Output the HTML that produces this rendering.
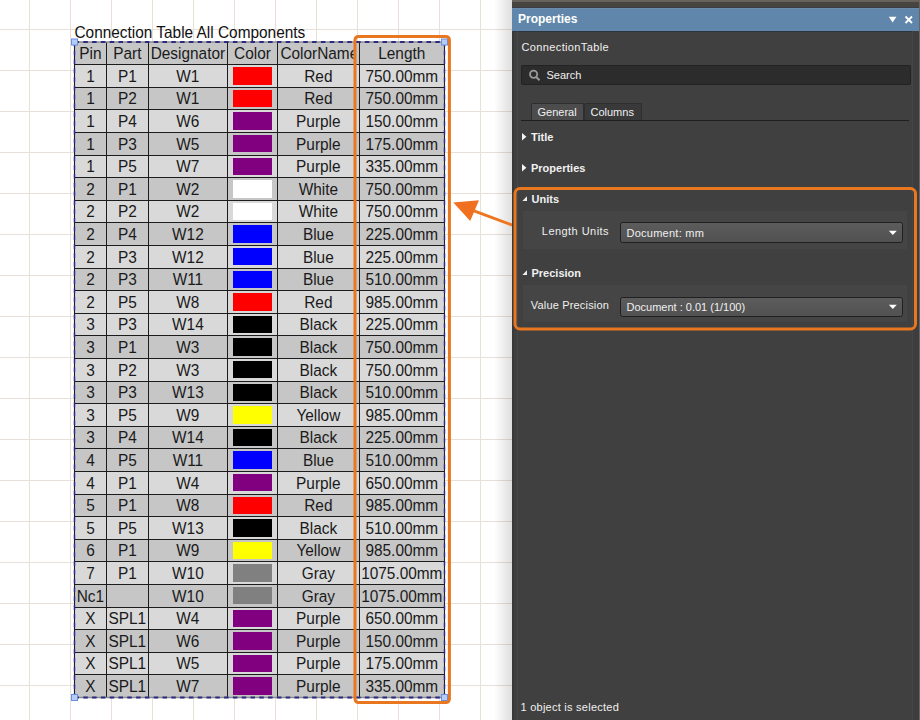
<!DOCTYPE html>
<html><head><meta charset="utf-8">
<style>
*{margin:0;padding:0;box-sizing:border-box}
html,body{width:920px;height:720px;overflow:hidden;background:#ffffff;font-family:"Liberation Sans",sans-serif}
.gv{position:absolute;top:0;width:1px;height:720px;background:#e8e0d8}
.gh{position:absolute;left:0;width:512px;height:1px;background:#e8e0d8}
#tbl{position:absolute;left:0;top:0;width:512px;height:720px;overflow:hidden}
.rb{position:absolute;left:74.5px;width:370px}
.sw{position:absolute;left:233px;width:39px}
.hl{position:absolute;left:74.5px;width:370px;height:1.2px;background:#1c1c1c}
.vl{position:absolute;top:42px;width:1.2px;height:655.4px;background:#1c1c1c}
.t{position:absolute;height:22.6px;line-height:22.6px;font-size:15.4px;color:#1a1a1a;text-align:center;white-space:nowrap;margin-top:1.2px;transform:scaleY(1.06)}
.title{position:absolute;left:74.5px;top:22.5px;font-size:15.4px;line-height:20px;color:#111;white-space:nowrap;transform:scaleY(1.07);transform-origin:0 15px}
.dash{position:absolute}
.hd{position:absolute;width:6px;height:6px;background:#b4ccf6;border:1px solid #6a8ee0}
#panel{position:absolute;left:512px;top:0;width:408px;height:720px;background:#404040;overflow:hidden;color:#f0f0f0;font-size:11px}
.p{position:absolute;white-space:nowrap;line-height:13px}
.b{font-weight:bold}
.dd{position:absolute;left:108px;width:282.5px;height:20.6px;border:1px solid #202020;border-radius:2.5px;background:linear-gradient(#5c5c5c,#515151)}
</style></head><body>
<div class="gv" style="left:29px"></div>
<div class="gv" style="left:70px"></div>
<div class="gv" style="left:111px"></div>
<div class="gv" style="left:152px"></div>
<div class="gv" style="left:193px"></div>
<div class="gv" style="left:234px"></div>
<div class="gv" style="left:275px"></div>
<div class="gv" style="left:316px"></div>
<div class="gv" style="left:357px"></div>
<div class="gv" style="left:398px"></div>
<div class="gv" style="left:439px"></div>
<div class="gv" style="left:480px"></div>
<div class="gh" style="top:29px"></div>
<div class="gh" style="top:70px"></div>
<div class="gh" style="top:111px"></div>
<div class="gh" style="top:152px"></div>
<div class="gh" style="top:193px"></div>
<div class="gh" style="top:234px"></div>
<div class="gh" style="top:275px"></div>
<div class="gh" style="top:316px"></div>
<div class="gh" style="top:357px"></div>
<div class="gh" style="top:398px"></div>
<div class="gh" style="top:439px"></div>
<div class="gh" style="top:480px"></div>
<div class="gh" style="top:521px"></div>
<div class="gh" style="top:562px"></div>
<div class="gh" style="top:603px"></div>
<div class="gh" style="top:644px"></div>
<div class="gh" style="top:685px"></div>
<div style="position:absolute;left:494px;top:0;width:18px;height:720px;background:linear-gradient(to right,rgba(0,0,0,0),rgba(0,0,0,0.13))"></div>
<div class="title">Connection Table All Components</div>
<div id="tbl">
<div class="rb" style="top:42.00px;height:22.60px;background:#c6c6c6"></div>
<div class="rb" style="top:64.60px;height:22.60px;background:#d9d9d9"></div>
<div class="rb" style="top:87.20px;height:22.60px;background:#c6c6c6"></div>
<div class="rb" style="top:109.80px;height:22.60px;background:#d9d9d9"></div>
<div class="rb" style="top:132.40px;height:22.60px;background:#c6c6c6"></div>
<div class="rb" style="top:155.00px;height:22.60px;background:#d9d9d9"></div>
<div class="rb" style="top:177.60px;height:22.60px;background:#c6c6c6"></div>
<div class="rb" style="top:200.20px;height:22.60px;background:#d9d9d9"></div>
<div class="rb" style="top:222.80px;height:22.60px;background:#c6c6c6"></div>
<div class="rb" style="top:245.40px;height:22.60px;background:#d9d9d9"></div>
<div class="rb" style="top:268.00px;height:22.60px;background:#c6c6c6"></div>
<div class="rb" style="top:290.60px;height:22.60px;background:#d9d9d9"></div>
<div class="rb" style="top:313.20px;height:22.60px;background:#d9d9d9"></div>
<div class="rb" style="top:335.80px;height:22.60px;background:#c6c6c6"></div>
<div class="rb" style="top:358.40px;height:22.60px;background:#d9d9d9"></div>
<div class="rb" style="top:381.00px;height:22.60px;background:#c6c6c6"></div>
<div class="rb" style="top:403.60px;height:22.60px;background:#d9d9d9"></div>
<div class="rb" style="top:426.20px;height:22.60px;background:#c6c6c6"></div>
<div class="rb" style="top:448.80px;height:22.60px;background:#c6c6c6"></div>
<div class="rb" style="top:471.40px;height:22.60px;background:#d9d9d9"></div>
<div class="rb" style="top:494.00px;height:22.60px;background:#c6c6c6"></div>
<div class="rb" style="top:516.60px;height:22.60px;background:#d9d9d9"></div>
<div class="rb" style="top:539.20px;height:22.60px;background:#c6c6c6"></div>
<div class="rb" style="top:561.80px;height:22.60px;background:#d9d9d9"></div>
<div class="rb" style="top:584.40px;height:22.60px;background:#c6c6c6"></div>
<div class="rb" style="top:607.00px;height:22.60px;background:#d9d9d9"></div>
<div class="rb" style="top:629.60px;height:22.60px;background:#c6c6c6"></div>
<div class="rb" style="top:652.20px;height:22.60px;background:#d9d9d9"></div>
<div class="rb" style="top:674.80px;height:22.60px;background:#c6c6c6"></div>
<div class="sw" style="top:67.20px;height:17.40px;background:#ff0000"></div>
<div class="sw" style="top:89.80px;height:17.40px;background:#ff0000"></div>
<div class="sw" style="top:112.40px;height:17.40px;background:#800080"></div>
<div class="sw" style="top:135.00px;height:17.40px;background:#800080"></div>
<div class="sw" style="top:157.60px;height:17.40px;background:#800080"></div>
<div class="sw" style="top:180.20px;height:17.40px;background:#ffffff"></div>
<div class="sw" style="top:202.80px;height:17.40px;background:#ffffff"></div>
<div class="sw" style="top:225.40px;height:17.40px;background:#0000ff"></div>
<div class="sw" style="top:248.00px;height:17.40px;background:#0000ff"></div>
<div class="sw" style="top:270.60px;height:17.40px;background:#0000ff"></div>
<div class="sw" style="top:293.20px;height:17.40px;background:#ff0000"></div>
<div class="sw" style="top:315.80px;height:17.40px;background:#000000"></div>
<div class="sw" style="top:338.40px;height:17.40px;background:#000000"></div>
<div class="sw" style="top:361.00px;height:17.40px;background:#000000"></div>
<div class="sw" style="top:383.60px;height:17.40px;background:#000000"></div>
<div class="sw" style="top:406.20px;height:17.40px;background:#ffff00"></div>
<div class="sw" style="top:428.80px;height:17.40px;background:#000000"></div>
<div class="sw" style="top:451.40px;height:17.40px;background:#0000ff"></div>
<div class="sw" style="top:474.00px;height:17.40px;background:#800080"></div>
<div class="sw" style="top:496.60px;height:17.40px;background:#ff0000"></div>
<div class="sw" style="top:519.20px;height:17.40px;background:#000000"></div>
<div class="sw" style="top:541.80px;height:17.40px;background:#ffff00"></div>
<div class="sw" style="top:564.40px;height:17.40px;background:#808080"></div>
<div class="sw" style="top:587.00px;height:17.40px;background:#808080"></div>
<div class="sw" style="top:609.60px;height:17.40px;background:#800080"></div>
<div class="sw" style="top:632.20px;height:17.40px;background:#800080"></div>
<div class="sw" style="top:654.80px;height:17.40px;background:#800080"></div>
<div class="sw" style="top:677.40px;height:17.40px;background:#800080"></div>
<div class="hl" style="top:64.10px"></div>
<div class="hl" style="top:86.70px"></div>
<div class="hl" style="top:109.30px"></div>
<div class="hl" style="top:131.90px"></div>
<div class="hl" style="top:154.50px"></div>
<div class="hl" style="top:177.10px"></div>
<div class="hl" style="top:199.70px"></div>
<div class="hl" style="top:222.30px"></div>
<div class="hl" style="top:244.90px"></div>
<div class="hl" style="top:267.50px"></div>
<div class="hl" style="top:290.10px"></div>
<div class="hl" style="top:312.70px"></div>
<div class="hl" style="top:335.30px"></div>
<div class="hl" style="top:357.90px"></div>
<div class="hl" style="top:380.50px"></div>
<div class="hl" style="top:403.10px"></div>
<div class="hl" style="top:425.70px"></div>
<div class="hl" style="top:448.30px"></div>
<div class="hl" style="top:470.90px"></div>
<div class="hl" style="top:493.50px"></div>
<div class="hl" style="top:516.10px"></div>
<div class="hl" style="top:538.70px"></div>
<div class="hl" style="top:561.30px"></div>
<div class="hl" style="top:583.90px"></div>
<div class="hl" style="top:606.50px"></div>
<div class="hl" style="top:629.10px"></div>
<div class="hl" style="top:651.70px"></div>
<div class="hl" style="top:674.30px"></div>
<div class="vl" style="left:105.90px"></div>
<div class="vl" style="left:147.80px"></div>
<div class="vl" style="left:227.00px"></div>
<div class="vl" style="left:277.00px"></div>
<div class="vl" style="left:358.70px"></div>
<div class="t" style="left:74.50px;top:42.00px;width:31.90px">Pin</div>
<div class="t" style="left:106.40px;top:42.00px;width:41.90px">Part</div>
<div class="t" style="left:148.30px;top:42.00px;width:79.20px">Designator</div>
<div class="t" style="left:227.50px;top:42.00px;width:50.00px">Color</div>
<div style="position:absolute;left:277.5px;top:42px;width:78.5px;height:22.6px;overflow:hidden"><div class="t" style="left:1px;top:0;width:81.7px">ColorName</div></div>
<div class="t" style="left:359.20px;top:42.00px;width:85.20px">Length</div>
<div class="t" style="left:74.50px;top:64.60px;width:31.90px">1</div>
<div class="t" style="left:106.40px;top:64.60px;width:41.90px">P1</div>
<div class="t" style="left:148.30px;top:64.60px;width:79.20px">W1</div>
<div class="t" style="left:277.50px;top:64.60px;width:81.70px">Red</div>
<div class="t" style="left:359.20px;top:64.60px;width:85.20px">750.00mm</div>
<div class="t" style="left:74.50px;top:87.20px;width:31.90px">1</div>
<div class="t" style="left:106.40px;top:87.20px;width:41.90px">P2</div>
<div class="t" style="left:148.30px;top:87.20px;width:79.20px">W1</div>
<div class="t" style="left:277.50px;top:87.20px;width:81.70px">Red</div>
<div class="t" style="left:359.20px;top:87.20px;width:85.20px">750.00mm</div>
<div class="t" style="left:74.50px;top:109.80px;width:31.90px">1</div>
<div class="t" style="left:106.40px;top:109.80px;width:41.90px">P4</div>
<div class="t" style="left:148.30px;top:109.80px;width:79.20px">W6</div>
<div class="t" style="left:277.50px;top:109.80px;width:81.70px">Purple</div>
<div class="t" style="left:359.20px;top:109.80px;width:85.20px">150.00mm</div>
<div class="t" style="left:74.50px;top:132.40px;width:31.90px">1</div>
<div class="t" style="left:106.40px;top:132.40px;width:41.90px">P3</div>
<div class="t" style="left:148.30px;top:132.40px;width:79.20px">W5</div>
<div class="t" style="left:277.50px;top:132.40px;width:81.70px">Purple</div>
<div class="t" style="left:359.20px;top:132.40px;width:85.20px">175.00mm</div>
<div class="t" style="left:74.50px;top:155.00px;width:31.90px">1</div>
<div class="t" style="left:106.40px;top:155.00px;width:41.90px">P5</div>
<div class="t" style="left:148.30px;top:155.00px;width:79.20px">W7</div>
<div class="t" style="left:277.50px;top:155.00px;width:81.70px">Purple</div>
<div class="t" style="left:359.20px;top:155.00px;width:85.20px">335.00mm</div>
<div class="t" style="left:74.50px;top:177.60px;width:31.90px">2</div>
<div class="t" style="left:106.40px;top:177.60px;width:41.90px">P1</div>
<div class="t" style="left:148.30px;top:177.60px;width:79.20px">W2</div>
<div class="t" style="left:277.50px;top:177.60px;width:81.70px">White</div>
<div class="t" style="left:359.20px;top:177.60px;width:85.20px">750.00mm</div>
<div class="t" style="left:74.50px;top:200.20px;width:31.90px">2</div>
<div class="t" style="left:106.40px;top:200.20px;width:41.90px">P2</div>
<div class="t" style="left:148.30px;top:200.20px;width:79.20px">W2</div>
<div class="t" style="left:277.50px;top:200.20px;width:81.70px">White</div>
<div class="t" style="left:359.20px;top:200.20px;width:85.20px">750.00mm</div>
<div class="t" style="left:74.50px;top:222.80px;width:31.90px">2</div>
<div class="t" style="left:106.40px;top:222.80px;width:41.90px">P4</div>
<div class="t" style="left:148.30px;top:222.80px;width:79.20px">W12</div>
<div class="t" style="left:277.50px;top:222.80px;width:81.70px">Blue</div>
<div class="t" style="left:359.20px;top:222.80px;width:85.20px">225.00mm</div>
<div class="t" style="left:74.50px;top:245.40px;width:31.90px">2</div>
<div class="t" style="left:106.40px;top:245.40px;width:41.90px">P3</div>
<div class="t" style="left:148.30px;top:245.40px;width:79.20px">W12</div>
<div class="t" style="left:277.50px;top:245.40px;width:81.70px">Blue</div>
<div class="t" style="left:359.20px;top:245.40px;width:85.20px">225.00mm</div>
<div class="t" style="left:74.50px;top:268.00px;width:31.90px">2</div>
<div class="t" style="left:106.40px;top:268.00px;width:41.90px">P3</div>
<div class="t" style="left:148.30px;top:268.00px;width:79.20px">W11</div>
<div class="t" style="left:277.50px;top:268.00px;width:81.70px">Blue</div>
<div class="t" style="left:359.20px;top:268.00px;width:85.20px">510.00mm</div>
<div class="t" style="left:74.50px;top:290.60px;width:31.90px">2</div>
<div class="t" style="left:106.40px;top:290.60px;width:41.90px">P5</div>
<div class="t" style="left:148.30px;top:290.60px;width:79.20px">W8</div>
<div class="t" style="left:277.50px;top:290.60px;width:81.70px">Red</div>
<div class="t" style="left:359.20px;top:290.60px;width:85.20px">985.00mm</div>
<div class="t" style="left:74.50px;top:313.20px;width:31.90px">3</div>
<div class="t" style="left:106.40px;top:313.20px;width:41.90px">P3</div>
<div class="t" style="left:148.30px;top:313.20px;width:79.20px">W14</div>
<div class="t" style="left:277.50px;top:313.20px;width:81.70px">Black</div>
<div class="t" style="left:359.20px;top:313.20px;width:85.20px">225.00mm</div>
<div class="t" style="left:74.50px;top:335.80px;width:31.90px">3</div>
<div class="t" style="left:106.40px;top:335.80px;width:41.90px">P1</div>
<div class="t" style="left:148.30px;top:335.80px;width:79.20px">W3</div>
<div class="t" style="left:277.50px;top:335.80px;width:81.70px">Black</div>
<div class="t" style="left:359.20px;top:335.80px;width:85.20px">750.00mm</div>
<div class="t" style="left:74.50px;top:358.40px;width:31.90px">3</div>
<div class="t" style="left:106.40px;top:358.40px;width:41.90px">P2</div>
<div class="t" style="left:148.30px;top:358.40px;width:79.20px">W3</div>
<div class="t" style="left:277.50px;top:358.40px;width:81.70px">Black</div>
<div class="t" style="left:359.20px;top:358.40px;width:85.20px">750.00mm</div>
<div class="t" style="left:74.50px;top:381.00px;width:31.90px">3</div>
<div class="t" style="left:106.40px;top:381.00px;width:41.90px">P3</div>
<div class="t" style="left:148.30px;top:381.00px;width:79.20px">W13</div>
<div class="t" style="left:277.50px;top:381.00px;width:81.70px">Black</div>
<div class="t" style="left:359.20px;top:381.00px;width:85.20px">510.00mm</div>
<div class="t" style="left:74.50px;top:403.60px;width:31.90px">3</div>
<div class="t" style="left:106.40px;top:403.60px;width:41.90px">P5</div>
<div class="t" style="left:148.30px;top:403.60px;width:79.20px">W9</div>
<div class="t" style="left:277.50px;top:403.60px;width:81.70px">Yellow</div>
<div class="t" style="left:359.20px;top:403.60px;width:85.20px">985.00mm</div>
<div class="t" style="left:74.50px;top:426.20px;width:31.90px">3</div>
<div class="t" style="left:106.40px;top:426.20px;width:41.90px">P4</div>
<div class="t" style="left:148.30px;top:426.20px;width:79.20px">W14</div>
<div class="t" style="left:277.50px;top:426.20px;width:81.70px">Black</div>
<div class="t" style="left:359.20px;top:426.20px;width:85.20px">225.00mm</div>
<div class="t" style="left:74.50px;top:448.80px;width:31.90px">4</div>
<div class="t" style="left:106.40px;top:448.80px;width:41.90px">P5</div>
<div class="t" style="left:148.30px;top:448.80px;width:79.20px">W11</div>
<div class="t" style="left:277.50px;top:448.80px;width:81.70px">Blue</div>
<div class="t" style="left:359.20px;top:448.80px;width:85.20px">510.00mm</div>
<div class="t" style="left:74.50px;top:471.40px;width:31.90px">4</div>
<div class="t" style="left:106.40px;top:471.40px;width:41.90px">P1</div>
<div class="t" style="left:148.30px;top:471.40px;width:79.20px">W4</div>
<div class="t" style="left:277.50px;top:471.40px;width:81.70px">Purple</div>
<div class="t" style="left:359.20px;top:471.40px;width:85.20px">650.00mm</div>
<div class="t" style="left:74.50px;top:494.00px;width:31.90px">5</div>
<div class="t" style="left:106.40px;top:494.00px;width:41.90px">P1</div>
<div class="t" style="left:148.30px;top:494.00px;width:79.20px">W8</div>
<div class="t" style="left:277.50px;top:494.00px;width:81.70px">Red</div>
<div class="t" style="left:359.20px;top:494.00px;width:85.20px">985.00mm</div>
<div class="t" style="left:74.50px;top:516.60px;width:31.90px">5</div>
<div class="t" style="left:106.40px;top:516.60px;width:41.90px">P5</div>
<div class="t" style="left:148.30px;top:516.60px;width:79.20px">W13</div>
<div class="t" style="left:277.50px;top:516.60px;width:81.70px">Black</div>
<div class="t" style="left:359.20px;top:516.60px;width:85.20px">510.00mm</div>
<div class="t" style="left:74.50px;top:539.20px;width:31.90px">6</div>
<div class="t" style="left:106.40px;top:539.20px;width:41.90px">P1</div>
<div class="t" style="left:148.30px;top:539.20px;width:79.20px">W9</div>
<div class="t" style="left:277.50px;top:539.20px;width:81.70px">Yellow</div>
<div class="t" style="left:359.20px;top:539.20px;width:85.20px">985.00mm</div>
<div class="t" style="left:74.50px;top:561.80px;width:31.90px">7</div>
<div class="t" style="left:106.40px;top:561.80px;width:41.90px">P1</div>
<div class="t" style="left:148.30px;top:561.80px;width:79.20px">W10</div>
<div class="t" style="left:277.50px;top:561.80px;width:81.70px">Gray</div>
<div class="t" style="left:359.20px;top:561.80px;width:85.20px">1075.00mm</div>
<div class="t" style="left:74.50px;top:584.40px;width:31.90px">Nc1</div>
<div class="t" style="left:106.40px;top:584.40px;width:41.90px"></div>
<div class="t" style="left:148.30px;top:584.40px;width:79.20px">W10</div>
<div class="t" style="left:277.50px;top:584.40px;width:81.70px">Gray</div>
<div class="t" style="left:359.20px;top:584.40px;width:85.20px">1075.00mm</div>
<div class="t" style="left:74.50px;top:607.00px;width:31.90px">X</div>
<div class="t" style="left:106.40px;top:607.00px;width:41.90px">SPL1</div>
<div class="t" style="left:148.30px;top:607.00px;width:79.20px">W4</div>
<div class="t" style="left:277.50px;top:607.00px;width:81.70px">Purple</div>
<div class="t" style="left:359.20px;top:607.00px;width:85.20px">650.00mm</div>
<div class="t" style="left:74.50px;top:629.60px;width:31.90px">X</div>
<div class="t" style="left:106.40px;top:629.60px;width:41.90px">SPL1</div>
<div class="t" style="left:148.30px;top:629.60px;width:79.20px">W6</div>
<div class="t" style="left:277.50px;top:629.60px;width:81.70px">Purple</div>
<div class="t" style="left:359.20px;top:629.60px;width:85.20px">150.00mm</div>
<div class="t" style="left:74.50px;top:652.20px;width:31.90px">X</div>
<div class="t" style="left:106.40px;top:652.20px;width:41.90px">SPL1</div>
<div class="t" style="left:148.30px;top:652.20px;width:79.20px">W5</div>
<div class="t" style="left:277.50px;top:652.20px;width:81.70px">Purple</div>
<div class="t" style="left:359.20px;top:652.20px;width:85.20px">175.00mm</div>
<div class="t" style="left:74.50px;top:674.80px;width:31.90px">X</div>
<div class="t" style="left:106.40px;top:674.80px;width:41.90px">SPL1</div>
<div class="t" style="left:148.30px;top:674.80px;width:79.20px">W7</div>
<div class="t" style="left:277.50px;top:674.80px;width:81.70px">Purple</div>
<div class="t" style="left:359.20px;top:674.80px;width:85.20px">335.00mm</div>
</div>
<svg style="position:absolute;left:0;top:0" width="512" height="720">
 <line x1="74" y1="42" x2="445" y2="42" stroke="#8a8a90" stroke-width="1.5"/>
 <line x1="74" y1="697.5" x2="445" y2="697.5" stroke="#8a8a90" stroke-width="1.5"/>
 <line x1="444.5" y1="42" x2="444.5" y2="697.5" stroke="#22222c" stroke-width="1.1"/>
 <line x1="74.5" y1="42" x2="74.5" y2="697.5" stroke="#1a1a30" stroke-width="1.1"/>
 <line x1="74.5" y1="42" x2="444.5" y2="42" stroke="#2a2a80" stroke-width="1.8" stroke-dasharray="4.5 4.3"/>
 <line x1="74.5" y1="697.5" x2="444.5" y2="697.5" stroke="#2a2a80" stroke-width="1.8" stroke-dasharray="4.5 4.3"/>
 <line x1="74.5" y1="42" x2="74.5" y2="697.5" stroke="#3030a8" stroke-width="1.6" stroke-dasharray="4.5 4.3" opacity="0.8"/>
 <line x1="444.5" y1="42" x2="444.5" y2="697.5" stroke="#3030a8" stroke-width="1.6" stroke-dasharray="4.5 4.3" opacity="0.7"/>
 <rect x="71.5" y="39" width="6" height="6" fill="#b4ccf6" stroke="#6a8ee0" stroke-width="1"/>
 <rect x="441.5" y="39" width="6" height="6" fill="#b4ccf6" stroke="#6a8ee0" stroke-width="1"/>
 <rect x="71.5" y="694.5" width="6" height="6" fill="#b4ccf6" stroke="#6a8ee0" stroke-width="1"/>
 <rect x="441.5" y="694.5" width="6" height="6" fill="#b4ccf6" stroke="#6a8ee0" stroke-width="1"/>
 <rect x="355" y="36.4" width="94.4" height="666.2" rx="3.5" ry="3.5" fill="none" stroke="#e8771f" stroke-width="3"/>
 <line x1="512" y1="225" x2="474" y2="210.8" stroke="#ee761e" stroke-width="3"/>
 <polygon points="453.3,202.4 479,200.2 470.2,221.1" fill="#f07020"/>
</svg>
<div id="panel">
 <div style="position:absolute;left:0;top:0;width:408px;height:8px;background:#48443f"></div>
 <div style="position:absolute;left:0;top:0;width:408px;height:1.5px;background:#67625c"></div>
 <div style="position:absolute;left:0;top:7px;width:408px;height:1px;background:#3a3e44"></div>
 <div style="position:absolute;left:0;top:8px;width:408px;height:23px;background:#6087ab"></div>
 <div style="position:absolute;left:0;top:8px;width:408px;height:1px;background:#6b8cab"></div>
 <div style="position:absolute;left:0;top:30.5px;width:408px;height:1px;background:#2c3540"></div>
 <div style="position:absolute;left:5px;top:31px;width:1px;height:689px;background:#474747"></div>
 <div style="position:absolute;left:0;top:31px;width:1.5px;height:689px;background:#393939"></div>
 <div style="position:absolute;left:400px;top:31px;width:1px;height:689px;background:#454545"></div>
 <div style="position:absolute;left:401px;top:31px;width:6px;height:689px;background:#3d3d3d"></div>
 <div style="position:absolute;left:407px;top:0;width:1px;height:720px;background:#666"></div>
 <div class="p b" style="left:6px;top:13px;font-size:12px;color:#fff">Properties</div>
 <svg style="position:absolute;left:376px;top:16px" width="10" height="8"><polygon points="0.8,0.8 8.4,0.8 4.6,6.5" fill="#fff"/></svg>
 <svg style="position:absolute;left:392px;top:15px" width="10" height="10"><path d="M1.5 1.5 L8 8 M8 1.5 L1.5 8" stroke="#fff" stroke-width="1.8"/></svg>
 <div class="p" style="left:9.5px;top:41px;letter-spacing:0.37px">ConnectionTable</div>
 <div style="position:absolute;left:9px;top:65px;width:390px;height:19.6px;background:#2c2c2c;border:1px solid #232323;border-radius:1.5px"></div>
 <svg style="position:absolute;left:16px;top:69.2px" width="14" height="14"><circle cx="5.6" cy="5.3" r="3.6" fill="none" stroke="#999" stroke-width="1.8"/><line x1="8.2" y1="8" x2="11.5" y2="11.2" stroke="#999" stroke-width="2"/></svg>
 <div class="p" style="left:34.5px;top:69px">Search</div>
 <div style="position:absolute;left:18.5px;top:102.5px;width:53px;height:17.5px;background:#4c4c4c;border:1px solid #2e2e2e;border-bottom:none;border-radius:2px 2px 0 0"></div>
 <div style="position:absolute;left:71.5px;top:102.5px;width:58.5px;height:17.5px;background:#393939;border:1px solid #2e2e2e;border-bottom:none;border-radius:2px 2px 0 0"></div>
 <div style="position:absolute;left:9px;top:119.5px;width:388px;height:1.5px;background:#1f1f1f"></div>
 <div class="p" style="left:25.5px;top:106px">General</div>
 <div class="p" style="left:78.5px;top:106px">Columns</div>
 <svg style="position:absolute;left:9.8px;top:133px" width="6" height="8"><polygon points="0,0 4.4,3.8 0,7.6" fill="#f4f4f4"/></svg>
 <div class="p b" style="left:19px;top:131px">Title</div>
 <svg style="position:absolute;left:9.8px;top:164px" width="6" height="8"><polygon points="0,0 4.4,3.8 0,7.6" fill="#f4f4f4"/></svg>
 <div class="p b" style="left:19px;top:162px">Properties</div>
 <div style="position:absolute;left:11px;top:211px;width:384px;height:38px;background:#454545"></div>
 <div style="position:absolute;left:11px;top:285px;width:384px;height:37px;background:#454545"></div>
 <svg style="position:absolute;left:10px;top:196px" width="7" height="7"><polygon points="5,0.3 5,5 0.3,5" fill="#eee"/></svg>
 <div class="p b" style="left:19.5px;top:193px">Units</div>
 <div class="p" style="left:21px;top:225px;width:76px;text-align:right;letter-spacing:0.45px">Length Units</div>
 <div class="dd" style="top:222.3px"></div>
 <div class="p" style="left:114.5px;top:227px;letter-spacing:0.25px">Document: mm</div>
 <svg style="position:absolute;left:376px;top:230px" width="10" height="6"><polygon points="0.8,0.8 8.8,0.8 4.8,5" fill="#fff"/></svg>
 <svg style="position:absolute;left:10px;top:270px" width="7" height="7"><polygon points="5,0.3 5,5 0.3,5" fill="#eee"/></svg>
 <div class="p b" style="left:19.5px;top:267px">Precision</div>
 <div class="p" style="left:6px;top:299px;width:91px;text-align:right;letter-spacing:0.17px">Value Precision</div>
 <div class="dd" style="top:296.5px"></div>
 <div class="p" style="left:114.5px;top:301px">Document : 0.01 (1/100)</div>
 <svg style="position:absolute;left:376px;top:304px" width="10" height="6"><polygon points="0.8,0.8 8.8,0.8 4.8,5" fill="#fff"/></svg>
 <svg style="position:absolute;left:0;top:0" width="408" height="720"><rect x="3" y="188.5" width="400.5" height="140.5" rx="5" ry="5" fill="none" stroke="#e8771f" stroke-width="3"/></svg>
 <div class="p" style="left:8.5px;top:701.3px;letter-spacing:0.25px">1 object is selected</div>
</div>
</body></html>
